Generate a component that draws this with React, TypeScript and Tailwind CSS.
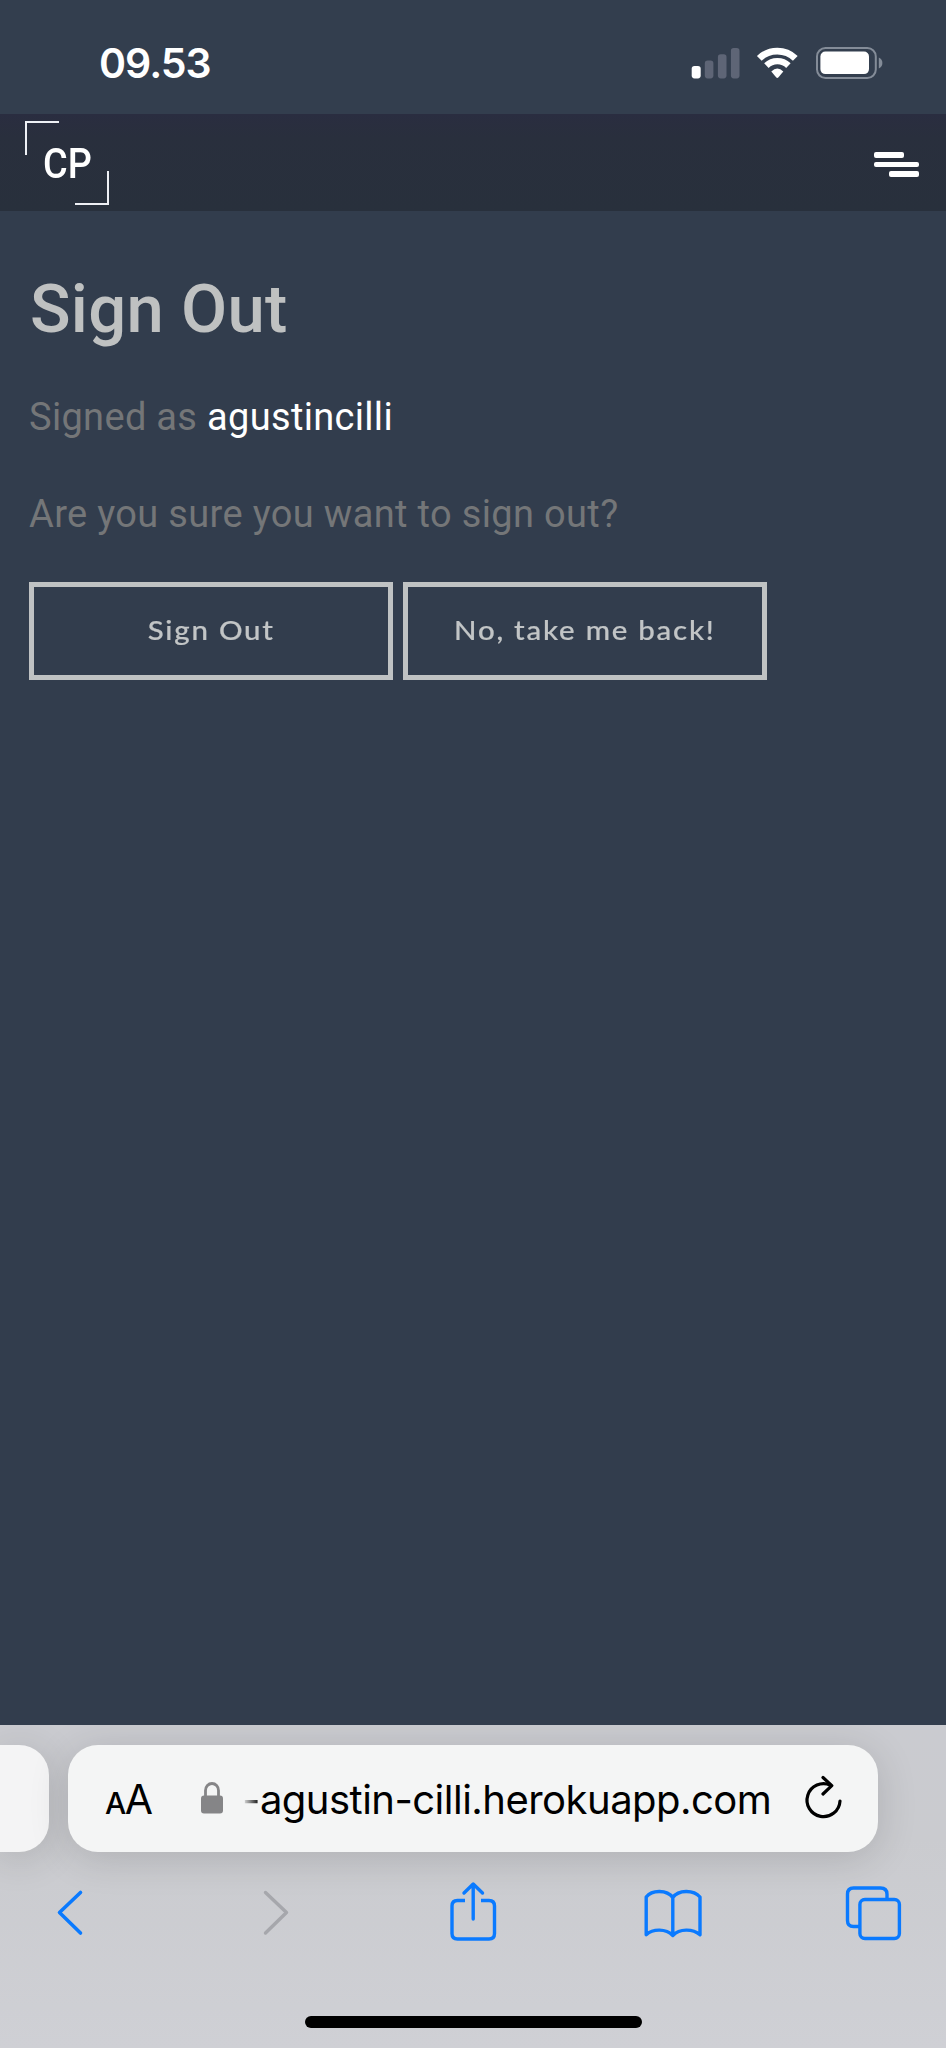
import React from "react";

function StatusBar() {
  return (
    <div className="flex h-[114px] items-start justify-between bg-[#333e4e] pl-[99px] pr-[63px]">
      <span className="mt-[38px] text-[41px] leading-[51px] font-semibold tracking-[-1px] text-white">09.53</span>
      <svg className="mt-[46px]" width="192" height="34" viewBox="691 46 192 34" fill="none">
        <rect x="691.7" y="66" width="9" height="12.4" rx="2.8" fill="#fff" />
        <rect x="704.8" y="60.6" width="8.6" height="17.8" rx="2.8" fill="#5e6576" />
        <rect x="717.9" y="54.2" width="8.6" height="24.2" rx="2.8" fill="#5e6576" />
        <rect x="730.9" y="48" width="8.6" height="30.4" rx="2.8" fill="#5e6576" />
        <path d="M759.3 58.4A26 26 0 0 1 795.3 58.4" stroke="#fff" strokeWidth="6.8" />
        <path d="M766.4 65.6A15.8 15.8 0 0 1 788.4 65.6" stroke="#fff" strokeWidth="6.4" />
        <path d="M771.3 71.4Q777.3 65.8 783.3 71.4L778.5 77.3Q777.3 78.6 776.1 77.3Z" fill="#fff" />
        <rect x="817" y="48" width="58.8" height="30" rx="8.5" stroke="#848c98" strokeWidth="2" />
        <rect x="820.4" y="51.5" width="48.6" height="22.6" rx="5" fill="#fff" />
        <path d="M878.8 57.6Q882.4 59.3 882.4 63T878.8 68.4Z" fill="#848c98" />
      </svg>
    </div>
  );
}

function Header() {
  return (
    <header className="flex h-[97px] items-start justify-between bg-[linear-gradient(#2a2d40_0%,#292f3d_24%,#28303c_100%)] pl-[25px] pr-[27px]">
      <div className="relative mt-[7px] flex h-[84px] w-[84px] items-center">
        <span className="absolute top-0 left-0 h-[34px] w-[34px] border-t-2 border-l-2 border-[#eef0f5]" />
        <span className="absolute right-0 bottom-0 h-[34px] w-[34px] border-r-2 border-b-2 border-[#eef0f5]" />
        <span className="mt-[2px] ml-[17.5px] origin-left scale-x-[0.9] font-[Roboto] text-[42px] leading-[50px] font-medium text-white">CP</span>
      </div>
      <div className="mt-[38px] flex w-[45px] flex-col gap-[4px]">
        <span className="h-[5.5px] w-[30px] rounded-[2px] bg-white" />
        <span className="h-[5.5px] w-[45px] rounded-[2px] bg-white" />
        <span className="h-[5.5px] w-[30px] self-end rounded-[2px] bg-white" />
      </div>
    </header>
  );
}

function OutlineButton({ children }: { children: React.ReactNode }) {
  return (
    <button className="flex h-[98px] w-[364px] items-center justify-center border-[5px] border-[#bfc2c3] font-[Lato] text-[26.5px] font-medium tracking-[1.6px] text-[#c2c5c6]">
      <span className="scale-x-[1.11] whitespace-nowrap [-webkit-text-stroke:0.2px_#c2c5c6]">{children}</span>
    </button>
  );
}

function Content() {
  return (
    <main className="h-[1514px] bg-[#323d4d] px-[29px] pt-[58px] font-[Roboto]">
      <h1 className="ml-[1px] text-[67px] leading-[80px] font-medium tracking-[0.3px] text-[#bfc1c1]">Sign Out</h1>
      <p className="mt-[45px] text-[38px] leading-[46px] tracking-[0.32px] text-[#747678]">
        Signed as <span className="text-white">agustincilli</span>
      </p>
      <p className="mt-[51px] text-[38px] leading-[46px] tracking-[0.34px] text-[#747678]">Are you sure you want to sign out?</p>
      <div className="mt-[45px] flex gap-[10px]">
        <OutlineButton>Sign Out</OutlineButton>
        <OutlineButton>No, take me back!</OutlineButton>
      </div>
    </main>
  );
}

function AddressBar() {
  return (
    <div className="flex h-[107px] gap-[19px]">
      <div className="w-[49px] shrink-0 rounded-r-[30px] bg-[#f4f4f5] shadow-[0_6px_40px_rgba(0,0,0,0.14)]" />
      <div className="flex w-[810px] shrink-0 items-center rounded-[30px] bg-[#f4f5f5] pl-[37px] shadow-[0_6px_40px_rgba(0,0,0,0.14)]">
        <div className="flex w-[96px] shrink-0 items-baseline pt-[5px] text-black">
          <span className="text-[30px] leading-[50px] font-medium tracking-[-1.5px]">A</span>
          <span className="text-[41px] leading-[50px]">A</span>
        </div>
        <svg className="shrink-0" width="22" height="32" viewBox="0 0 22 32" fill="none">
          <path d="M4.5 15V8.5a6.5 7 0 0 1 13 0V15" stroke="#858587" strokeWidth="2.8" />
          <rect x="0" y="13.5" width="22" height="18" rx="3" fill="#858587" />
        </svg>
        <div className="ml-[19px] flex w-[561px] shrink-0 pt-[3px] text-[40px] leading-[50px] tracking-[-0.52px] whitespace-nowrap text-black">
          <span className="bg-linear-to-r from-transparent to-black bg-clip-text text-transparent">-</span>
          <span>agustin-cilli.herokuapp.com</span>
        </div>
        <svg className="-mt-[2px] shrink-0" width="40" height="46" viewBox="804 1773 40 46" fill="none" stroke="#000" strokeWidth="3.2" strokeLinecap="round" strokeLinejoin="round">
          <path d="M831.5 1784.2A16.5 16.5 0 1 0 841 1800" />
          <path d="M824 1776.5L832.8 1784.6L824 1793" />
        </svg>
      </div>
    </div>
  );
}

function Toolbar() {
  return (
    <nav className="mt-[29px] flex h-[62px] items-start pl-[56px]" aria-label="Browser">
      <svg width="28" height="62" viewBox="56 1880 28 62" fill="none" stroke="#0a7aff" strokeWidth="3.6" strokeLinecap="round" strokeLinejoin="round">
        <path d="M80.5 1891.5L59.5 1911.5L80.5 1932" />
      </svg>
      <svg className="ml-[177px]" width="28" height="62" viewBox="261 1880 28 62" fill="none" stroke="#a6a7ac" strokeWidth="3.4" strokeLinecap="round" strokeLinejoin="round">
        <path d="M265.5 1891.5L286.5 1911.5L265.5 1932" />
      </svg>
      <svg className="ml-[159px]" width="50" height="62" viewBox="448 1880 50 62" fill="none" stroke="#0a7aff" strokeWidth="3.4" strokeLinecap="round" strokeLinejoin="round">
        <path d="M465 1899.5H457.5Q452 1899.5 452 1905V1932.5Q452 1938 457.5 1938H489Q494.5 1938 494.5 1932.5V1905Q494.5 1899.5 489 1899.5H481" strokeLinecap="butt" />
        <path d="M473.2 1918V1883.5M464 1892L473.2 1883L482.5 1892" />
      </svg>
      <svg className="ml-[145px]" width="60" height="62" viewBox="643 1880 60 62" fill="none" stroke="#0a7aff" strokeWidth="3.4" strokeLinejoin="round">
        <path d="M672.8 1896.5C667 1888.5 652 1888.5 646.2 1896V1933.8C653 1927.5 666 1927.5 672.8 1934.5C679.6 1927.5 692.6 1927.5 700 1933.8V1896C693.5 1888.5 678.5 1888.5 672.8 1896.5V1934.5" />
      </svg>
      <svg className="ml-[141px]" width="58" height="62" viewBox="844 1880 58 62" fill="none" stroke="#0a7aff" strokeWidth="3.4">
        <rect x="859.9" y="1898.5" width="39.5" height="39" rx="5" />
        <path d="M859 1925.5H853.5Q847.5 1925.5 847.5 1919.5V1893.2Q847.5 1887 853.5 1887H880.5Q887 1887 887 1893.2V1898" />
      </svg>
    </nav>
  );
}

export default function App() {
  return (
    <div className="flex h-[2048px] w-[946px] flex-col overflow-hidden font-[Inter]">
      <StatusBar />
      <Header />
      <Content />
      <footer className="flex h-[323px] flex-col overflow-hidden bg-[linear-gradient(#cacbd0,#cacbcf_35%,#cfd0d5)] pt-[19.5px]">
        <AddressBar />
        <Toolbar />
        <div className="mx-auto mt-[73.5px] h-[12px] w-[337px] rounded-full bg-black" />
      </footer>
    </div>
  );
}
